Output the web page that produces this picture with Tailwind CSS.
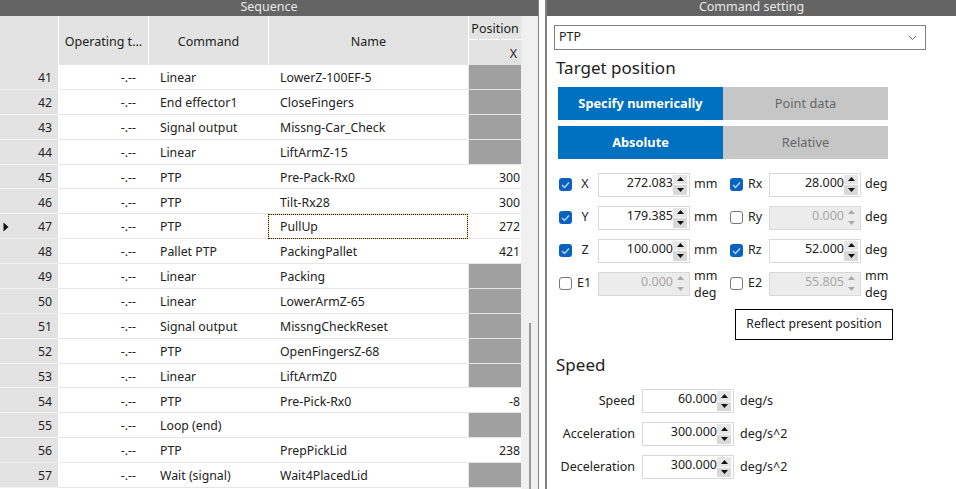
<!DOCTYPE html>
<html><head><meta charset="utf-8"><script src="https://cdn.jsdelivr.net/npm/@tailwindcss/browser@4"></script></head>
<body class="bg-white overflow-hidden">
<div class="flex w-[956px] h-[489px] overflow-hidden font-['Noto_Sans',sans-serif] text-[12.5px] text-[#222]">
<!-- Sequence -->
<section class="w-[539px] h-full flex flex-col border-r border-[#808080] shrink-0">
<div class="h-[16px] shrink-0 bg-[#646464] text-[#e8e8e8] text-[12.5px] leading-[13px] text-center overflow-visible">Sequence</div>
<div class="flex flex-1 min-h-0">
<div class="w-[521px] text-[12.3px]">
<div class="grid grid-cols-[58px_90px_120px_200px_53px] h-[49px] bg-[#e3e3e3] text-center text-[12.5px]">
<div></div>
<div class="border-l border-white flex items-center justify-center pt-[4px]">Operating t...</div>
<div class="border-l border-white flex items-center justify-center pt-[4px]">Command</div>
<div class="border-l border-white flex items-center justify-center pt-[4px]">Name</div>
<div class="border-l border-white flex flex-col"><div class="h-[24px] flex items-center justify-center border-b border-white pt-[3px]">Position</div><div class="flex-1 flex items-center justify-end pr-[4px] pt-[3px]">X</div></div>
</div>
<div class="grid grid-cols-[58px_90px_120px_200px_53px] auto-rows-[24.875px] [&>div]:pt-[3px]">
<div class="bg-[#e3e3e3] border-b border-[#f4f4f4] text-right pr-[6px] flex items-center justify-end">41</div><div class="border-b border-[#e6e6e6] text-right pr-[12px] flex items-center justify-end">-.--</div><div class="border-b border-[#e6e6e6] pl-[12px] flex items-center">Linear</div><div class="border-b border-[#e6e6e6] pl-[12px] flex items-center">LowerZ-100EF-5</div><div class="bg-[#a0a0a0] border-b border-l border-[#e6e6e6]"></div>
<div class="bg-[#e3e3e3] border-b border-[#f4f4f4] text-right pr-[6px] flex items-center justify-end">42</div><div class="border-b border-[#e6e6e6] text-right pr-[12px] flex items-center justify-end">-.--</div><div class="border-b border-[#e6e6e6] pl-[12px] flex items-center">End effector1</div><div class="border-b border-[#e6e6e6] pl-[12px] flex items-center">CloseFingers</div><div class="bg-[#a0a0a0] border-b border-l border-[#e6e6e6]"></div>
<div class="bg-[#e3e3e3] border-b border-[#f4f4f4] text-right pr-[6px] flex items-center justify-end">43</div><div class="border-b border-[#e6e6e6] text-right pr-[12px] flex items-center justify-end">-.--</div><div class="border-b border-[#e6e6e6] pl-[12px] flex items-center">Signal output</div><div class="border-b border-[#e6e6e6] pl-[12px] flex items-center">Missng-Car_Check</div><div class="bg-[#a0a0a0] border-b border-l border-[#e6e6e6]"></div>
<div class="bg-[#e3e3e3] border-b border-[#f4f4f4] text-right pr-[6px] flex items-center justify-end">44</div><div class="border-b border-[#e6e6e6] text-right pr-[12px] flex items-center justify-end">-.--</div><div class="border-b border-[#e6e6e6] pl-[12px] flex items-center">Linear</div><div class="border-b border-[#e6e6e6] pl-[12px] flex items-center">LiftArmZ-15</div><div class="bg-[#a0a0a0] border-b border-l border-[#e6e6e6]"></div>
<div class="bg-[#e3e3e3] border-b border-[#f4f4f4] text-right pr-[6px] flex items-center justify-end">45</div><div class="border-b border-[#e6e6e6] text-right pr-[12px] flex items-center justify-end">-.--</div><div class="border-b border-[#e6e6e6] pl-[12px] flex items-center">PTP</div><div class="border-b border-[#e6e6e6] pl-[12px] flex items-center">Pre-Pack-Rx0</div><div class="border-b border-[#e6e6e6] pr-[1px] flex items-center justify-end">300</div>
<div class="bg-[#e3e3e3] border-b border-[#f4f4f4] text-right pr-[6px] flex items-center justify-end">46</div><div class="border-b border-[#e6e6e6] text-right pr-[12px] flex items-center justify-end">-.--</div><div class="border-b border-[#e6e6e6] pl-[12px] flex items-center">PTP</div><div class="border-b border-[#e6e6e6] pl-[12px] flex items-center">Tilt-Rx28</div><div class="border-b border-[#e6e6e6] pr-[1px] flex items-center justify-end">300</div>
<div class="relative bg-[#e3e3e3] border-b border-[#f4f4f4] text-right pr-[6px] flex items-center justify-end"><svg class="absolute left-[3px] top-[8px]" width="6" height="10" viewBox="0 0 6 10"><path d="M0.5 0.5 L5.5 5 L0.5 9.5Z" fill="#111"/></svg>47</div><div class="border-b border-[#e6e6e6] text-right pr-[12px] flex items-center justify-end">-.--</div><div class="border-b border-[#e6e6e6] pl-[12px] flex items-center">PTP</div><div class="border border-dotted border-[#222] bg-[#e8d84a] !pt-0"><div class="h-full bg-white pl-[11px] pt-[2px] flex items-center">PullUp</div></div><div class="border-b border-[#e6e6e6] pr-[1px] flex items-center justify-end">272</div>
<div class="bg-[#e3e3e3] border-b border-[#f4f4f4] text-right pr-[6px] flex items-center justify-end">48</div><div class="border-b border-[#e6e6e6] text-right pr-[12px] flex items-center justify-end">-.--</div><div class="border-b border-[#e6e6e6] pl-[12px] flex items-center">Pallet PTP</div><div class="border-b border-[#e6e6e6] pl-[12px] flex items-center">PackingPallet</div><div class="border-b border-[#e6e6e6] pr-[1px] flex items-center justify-end">421</div>
<div class="bg-[#e3e3e3] border-b border-[#f4f4f4] text-right pr-[6px] flex items-center justify-end">49</div><div class="border-b border-[#e6e6e6] text-right pr-[12px] flex items-center justify-end">-.--</div><div class="border-b border-[#e6e6e6] pl-[12px] flex items-center">Linear</div><div class="border-b border-[#e6e6e6] pl-[12px] flex items-center">Packing</div><div class="bg-[#a0a0a0] border-b border-l border-[#e6e6e6]"></div>
<div class="bg-[#e3e3e3] border-b border-[#f4f4f4] text-right pr-[6px] flex items-center justify-end">50</div><div class="border-b border-[#e6e6e6] text-right pr-[12px] flex items-center justify-end">-.--</div><div class="border-b border-[#e6e6e6] pl-[12px] flex items-center">Linear</div><div class="border-b border-[#e6e6e6] pl-[12px] flex items-center">LowerArmZ-65</div><div class="bg-[#a0a0a0] border-b border-l border-[#e6e6e6]"></div>
<div class="bg-[#e3e3e3] border-b border-[#f4f4f4] text-right pr-[6px] flex items-center justify-end">51</div><div class="border-b border-[#e6e6e6] text-right pr-[12px] flex items-center justify-end">-.--</div><div class="border-b border-[#e6e6e6] pl-[12px] flex items-center">Signal output</div><div class="border-b border-[#e6e6e6] pl-[12px] flex items-center">MissngCheckReset</div><div class="bg-[#a0a0a0] border-b border-l border-[#e6e6e6]"></div>
<div class="bg-[#e3e3e3] border-b border-[#f4f4f4] text-right pr-[6px] flex items-center justify-end">52</div><div class="border-b border-[#e6e6e6] text-right pr-[12px] flex items-center justify-end">-.--</div><div class="border-b border-[#e6e6e6] pl-[12px] flex items-center">PTP</div><div class="border-b border-[#e6e6e6] pl-[12px] flex items-center">OpenFingersZ-68</div><div class="bg-[#a0a0a0] border-b border-l border-[#e6e6e6]"></div>
<div class="bg-[#e3e3e3] border-b border-[#f4f4f4] text-right pr-[6px] flex items-center justify-end">53</div><div class="border-b border-[#e6e6e6] text-right pr-[12px] flex items-center justify-end">-.--</div><div class="border-b border-[#e6e6e6] pl-[12px] flex items-center">Linear</div><div class="border-b border-[#e6e6e6] pl-[12px] flex items-center">LiftArmZ0</div><div class="bg-[#a0a0a0] border-b border-l border-[#e6e6e6]"></div>
<div class="bg-[#e3e3e3] border-b border-[#f4f4f4] text-right pr-[6px] flex items-center justify-end">54</div><div class="border-b border-[#e6e6e6] text-right pr-[12px] flex items-center justify-end">-.--</div><div class="border-b border-[#e6e6e6] pl-[12px] flex items-center">PTP</div><div class="border-b border-[#e6e6e6] pl-[12px] flex items-center">Pre-Pick-Rx0</div><div class="border-b border-[#e6e6e6] pr-[1px] flex items-center justify-end">-8</div>
<div class="bg-[#e3e3e3] border-b border-[#f4f4f4] text-right pr-[6px] flex items-center justify-end">55</div><div class="border-b border-[#e6e6e6] text-right pr-[12px] flex items-center justify-end">-.--</div><div class="border-b border-[#e6e6e6] pl-[12px] flex items-center">Loop (end)</div><div class="border-b border-[#e6e6e6] pl-[12px] flex items-center"></div><div class="bg-[#a0a0a0] border-b border-l border-[#e6e6e6]"></div>
<div class="bg-[#e3e3e3] border-b border-[#f4f4f4] text-right pr-[6px] flex items-center justify-end">56</div><div class="border-b border-[#e6e6e6] text-right pr-[12px] flex items-center justify-end">-.--</div><div class="border-b border-[#e6e6e6] pl-[12px] flex items-center">PTP</div><div class="border-b border-[#e6e6e6] pl-[12px] flex items-center">PrepPickLid</div><div class="border-b border-[#e6e6e6] pr-[1px] flex items-center justify-end">238</div>
<div class="bg-[#e3e3e3] border-b border-[#f4f4f4] text-right pr-[6px] flex items-center justify-end">57</div><div class="border-b border-[#e6e6e6] text-right pr-[12px] flex items-center justify-end">-.--</div><div class="border-b border-[#e6e6e6] pl-[12px] flex items-center">Wait (signal)</div><div class="border-b border-[#e6e6e6] pl-[12px] flex items-center">Wait4PlacedLid</div><div class="bg-[#a0a0a0] border-b border-l border-[#e6e6e6]"></div>
</div>
</div>
<div class="w-[17px] bg-[#f0f0f0] pl-[8px] pt-[307px]"><div class="w-[2px] h-full bg-[#9a9a9a]"></div></div>
</div>
</section>
<div class="w-[6px] shrink-0"></div>
<!-- Command setting -->
<section class="flex-1 h-full border-l-2 border-[#808080] flex flex-col">
<div class="h-[16px] shrink-0 bg-[#646464] text-[#e8e8e8] text-[12.5px] leading-[13px] text-center">Command setting</div>
<div class="pl-[7px]">
<div class="mt-[9px] w-[372px] h-[25px] border border-[#808080] flex items-center justify-between pl-[4px] pr-[8px]"><span>PTP</span><svg width="9" height="6" viewBox="0 0 9 6"><path d="M1 1 L4.5 4.5 L8 1" fill="none" stroke="#666" stroke-width="1"/></svg></div>
<h2 class="mt-[6px] ml-[2px] text-[17px] leading-[24px] font-normal">Target position</h2>
<div class="mt-[7px] ml-[4px] flex w-[330px] h-[33px] text-[12.8px]"><div class="flex-1 bg-[#0070c0] text-white font-bold flex items-center justify-center">Specify numerically</div><div class="flex-1 bg-[#c6c6c6] text-[#666] flex items-center justify-center">Point data</div></div>
<div class="mt-[6px] ml-[4px] flex w-[330px] h-[33px] text-[12.8px]"><div class="flex-1 bg-[#0070c0] text-white font-bold flex items-center justify-center">Absolute</div><div class="flex-1 bg-[#c6c6c6] text-[#666] flex items-center justify-center">Relative</div></div>

<div class="mt-[9px] ml-[5px] grid grid-cols-[171px_170px] auto-rows-[33px]">
<div class="flex items-center"><span class="w-[13px] h-[13px] rounded-[3px] bg-[#0a62c0] flex items-center justify-center"><svg width="9" height="8" viewBox="0 0 9 8"><path d="M1 4 L3.5 6.5 L8 1.5" fill="none" stroke="#bcd8f4" stroke-width="1.3"/></svg></span><span class="w-[26px] text-center">X</span><span class="w-[92px] h-[24px] border border-[#d8d8d8] flex items-center justify-end pr-[2px] pb-[3px]">272.083<span class="mt-[3px] w-[14px] h-[20px] flex flex-col gap-px"><span class="flex-1 bg-[#e6e6e6] flex items-center justify-center"><svg width="7" height="4" viewBox="0 0 7 4"><path d="M3.5 0 L7 4 H0Z" fill="#111"/></svg></span><span class="flex-1 bg-[#d8d8d8] flex items-center justify-center"><svg width="7" height="4" viewBox="0 0 7 4"><path d="M0 0 H7 L3.5 4Z" fill="#111"/></svg></span></span></span><span class="ml-[4px]">mm</span></div>
<div class="flex items-center"><span class="w-[13px] h-[13px] rounded-[3px] bg-[#0a62c0] flex items-center justify-center"><svg width="9" height="8" viewBox="0 0 9 8"><path d="M1 4 L3.5 6.5 L8 1.5" fill="none" stroke="#bcd8f4" stroke-width="1.3"/></svg></span><span class="w-[26px] pl-[5px]">Rx</span><span class="w-[92px] h-[24px] border border-[#d8d8d8] flex items-center justify-end pr-[2px] pb-[3px]">28.000<span class="mt-[3px] w-[14px] h-[20px] flex flex-col gap-px"><span class="flex-1 bg-[#e6e6e6] flex items-center justify-center"><svg width="7" height="4" viewBox="0 0 7 4"><path d="M3.5 0 L7 4 H0Z" fill="#111"/></svg></span><span class="flex-1 bg-[#d8d8d8] flex items-center justify-center"><svg width="7" height="4" viewBox="0 0 7 4"><path d="M0 0 H7 L3.5 4Z" fill="#111"/></svg></span></span></span><span class="ml-[4px]">deg</span></div>

<div class="flex items-center"><span class="w-[13px] h-[13px] rounded-[3px] bg-[#0a62c0] flex items-center justify-center"><svg width="9" height="8" viewBox="0 0 9 8"><path d="M1 4 L3.5 6.5 L8 1.5" fill="none" stroke="#bcd8f4" stroke-width="1.3"/></svg></span><span class="w-[26px] text-center">Y</span><span class="w-[92px] h-[24px] border border-[#d8d8d8] flex items-center justify-end pr-[2px] pb-[3px]">179.385<span class="mt-[3px] w-[14px] h-[20px] flex flex-col gap-px"><span class="flex-1 bg-[#e6e6e6] flex items-center justify-center"><svg width="7" height="4" viewBox="0 0 7 4"><path d="M3.5 0 L7 4 H0Z" fill="#111"/></svg></span><span class="flex-1 bg-[#d8d8d8] flex items-center justify-center"><svg width="7" height="4" viewBox="0 0 7 4"><path d="M0 0 H7 L3.5 4Z" fill="#111"/></svg></span></span></span><span class="ml-[4px]">mm</span></div>
<div class="flex items-center"><span class="w-[13px] h-[13px] rounded-[3px] border border-[#777] bg-white"></span><span class="w-[26px] pl-[5px]">Ry</span><span class="w-[92px] h-[24px] border border-[#d8d8d8] bg-[#ececec] text-[#a8a8a8] flex items-center justify-end pr-[2px] pb-[3px]">0.000<span class="mt-[3px] w-[14px] h-[20px] flex flex-col gap-px"><span class="flex-1 flex items-center justify-center"><svg width="7" height="4" viewBox="0 0 7 4"><path d="M3.5 0 L7 4 H0Z" fill="#aaa"/></svg></span><span class="flex-1 flex items-center justify-center"><svg width="7" height="4" viewBox="0 0 7 4"><path d="M0 0 H7 L3.5 4Z" fill="#aaa"/></svg></span></span></span><span class="ml-[4px]">deg</span></div>

<div class="flex items-center"><span class="w-[13px] h-[13px] rounded-[3px] bg-[#0a62c0] flex items-center justify-center"><svg width="9" height="8" viewBox="0 0 9 8"><path d="M1 4 L3.5 6.5 L8 1.5" fill="none" stroke="#bcd8f4" stroke-width="1.3"/></svg></span><span class="w-[26px] text-center">Z</span><span class="w-[92px] h-[24px] border border-[#d8d8d8] flex items-center justify-end pr-[2px] pb-[3px]">100.000<span class="mt-[3px] w-[14px] h-[20px] flex flex-col gap-px"><span class="flex-1 bg-[#e6e6e6] flex items-center justify-center"><svg width="7" height="4" viewBox="0 0 7 4"><path d="M3.5 0 L7 4 H0Z" fill="#111"/></svg></span><span class="flex-1 bg-[#d8d8d8] flex items-center justify-center"><svg width="7" height="4" viewBox="0 0 7 4"><path d="M0 0 H7 L3.5 4Z" fill="#111"/></svg></span></span></span><span class="ml-[4px]">mm</span></div>
<div class="flex items-center"><span class="w-[13px] h-[13px] rounded-[3px] bg-[#0a62c0] flex items-center justify-center"><svg width="9" height="8" viewBox="0 0 9 8"><path d="M1 4 L3.5 6.5 L8 1.5" fill="none" stroke="#bcd8f4" stroke-width="1.3"/></svg></span><span class="w-[26px] pl-[5px]">Rz</span><span class="w-[92px] h-[24px] border border-[#d8d8d8] flex items-center justify-end pr-[2px] pb-[3px]">52.000<span class="mt-[3px] w-[14px] h-[20px] flex flex-col gap-px"><span class="flex-1 bg-[#e6e6e6] flex items-center justify-center"><svg width="7" height="4" viewBox="0 0 7 4"><path d="M3.5 0 L7 4 H0Z" fill="#111"/></svg></span><span class="flex-1 bg-[#d8d8d8] flex items-center justify-center"><svg width="7" height="4" viewBox="0 0 7 4"><path d="M0 0 H7 L3.5 4Z" fill="#111"/></svg></span></span></span><span class="ml-[4px]">deg</span></div>

<div class="flex items-center"><span class="w-[13px] h-[13px] rounded-[3px] border border-[#777] bg-white"></span><span class="w-[26px] pl-[5px]">E1</span><span class="w-[92px] h-[24px] border border-[#d8d8d8] bg-[#ececec] text-[#a8a8a8] flex items-center justify-end pr-[2px] pb-[3px]">0.000<span class="mt-[3px] w-[14px] h-[20px] flex flex-col gap-px"><span class="flex-1 flex items-center justify-center"><svg width="7" height="4" viewBox="0 0 7 4"><path d="M3.5 0 L7 4 H0Z" fill="#aaa"/></svg></span><span class="flex-1 flex items-center justify-center"><svg width="7" height="4" viewBox="0 0 7 4"><path d="M0 0 H7 L3.5 4Z" fill="#aaa"/></svg></span></span></span><span class="ml-[4px] leading-[17px]">mm<br>deg</span></div>
<div class="flex items-center"><span class="w-[13px] h-[13px] rounded-[3px] border border-[#777] bg-white"></span><span class="w-[26px] pl-[5px]">E2</span><span class="w-[92px] h-[24px] border border-[#d8d8d8] bg-[#ececec] text-[#a8a8a8] flex items-center justify-end pr-[2px] pb-[3px]">55.805<span class="mt-[3px] w-[14px] h-[20px] flex flex-col gap-px"><span class="flex-1 flex items-center justify-center"><svg width="7" height="4" viewBox="0 0 7 4"><path d="M3.5 0 L7 4 H0Z" fill="#aaa"/></svg></span><span class="flex-1 flex items-center justify-center"><svg width="7" height="4" viewBox="0 0 7 4"><path d="M0 0 H7 L3.5 4Z" fill="#aaa"/></svg></span></span></span><span class="ml-[4px] leading-[17px]">mm<br>deg</span></div>
</div>

<div class="mt-[9px] ml-[181px] w-[158px] h-[31px] border border-black flex items-center justify-center text-[12.2px]">Reflect present position</div>
<h2 class="mt-[13px] ml-[2px] text-[17px] leading-[24px] font-normal">Speed</h2>
<div class="mt-[12px] grid grid-cols-[81px_92px_auto] auto-rows-[33px] justify-start items-start">
<div class="h-[24px] flex items-center justify-end">Speed</div><div class="ml-[7px] w-[92px] h-[24px] border border-[#d8d8d8] flex items-center justify-end pr-[2px] pb-[3px]">60.000<span class="mt-[3px] w-[14px] h-[20px] flex flex-col gap-px"><span class="flex-1 bg-[#e6e6e6] flex items-center justify-center"><svg width="7" height="4" viewBox="0 0 7 4"><path d="M3.5 0 L7 4 H0Z" fill="#111"/></svg></span><span class="flex-1 bg-[#d8d8d8] flex items-center justify-center"><svg width="7" height="4" viewBox="0 0 7 4"><path d="M0 0 H7 L3.5 4Z" fill="#111"/></svg></span></span></div><div class="h-[24px] ml-[13px] flex items-center">deg/s</div>
<div class="h-[24px] flex items-center justify-end">Acceleration</div><div class="ml-[7px] w-[92px] h-[24px] border border-[#d8d8d8] flex items-center justify-end pr-[2px] pb-[3px]">300.000<span class="mt-[3px] w-[14px] h-[20px] flex flex-col gap-px"><span class="flex-1 bg-[#e6e6e6] flex items-center justify-center"><svg width="7" height="4" viewBox="0 0 7 4"><path d="M3.5 0 L7 4 H0Z" fill="#111"/></svg></span><span class="flex-1 bg-[#d8d8d8] flex items-center justify-center"><svg width="7" height="4" viewBox="0 0 7 4"><path d="M0 0 H7 L3.5 4Z" fill="#111"/></svg></span></span></div><div class="h-[24px] ml-[13px] flex items-center">deg/s^2</div>
<div class="h-[24px] flex items-center justify-end">Deceleration</div><div class="ml-[7px] w-[92px] h-[24px] border border-[#d8d8d8] flex items-center justify-end pr-[2px] pb-[3px]">300.000<span class="mt-[3px] w-[14px] h-[20px] flex flex-col gap-px"><span class="flex-1 bg-[#e6e6e6] flex items-center justify-center"><svg width="7" height="4" viewBox="0 0 7 4"><path d="M3.5 0 L7 4 H0Z" fill="#111"/></svg></span><span class="flex-1 bg-[#d8d8d8] flex items-center justify-center"><svg width="7" height="4" viewBox="0 0 7 4"><path d="M0 0 H7 L3.5 4Z" fill="#111"/></svg></span></span></div><div class="h-[24px] ml-[13px] flex items-center">deg/s^2</div>
</div>
</div>
</section>
</div>
</body></html>
